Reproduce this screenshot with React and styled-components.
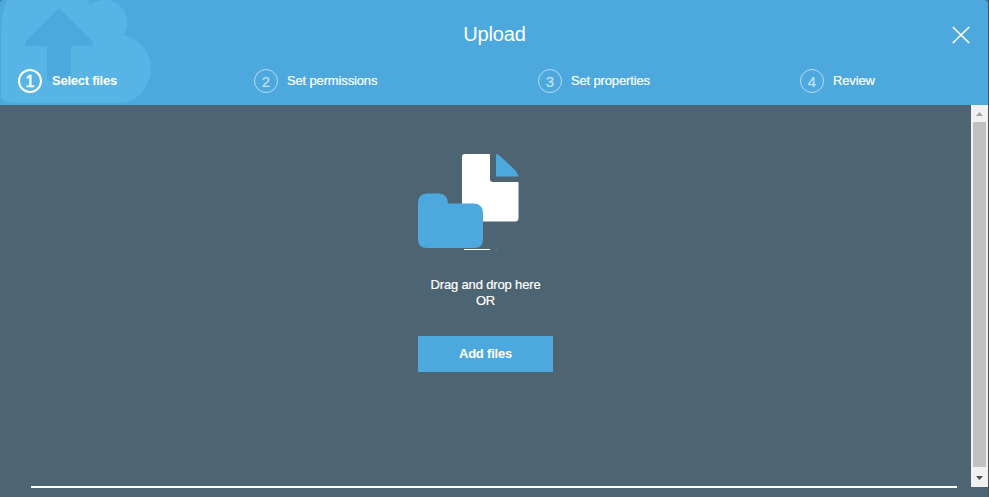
import React from "react";
import styled, { createGlobalStyle } from "styled-components";

const GlobalStyle = createGlobalStyle`
  * { box-sizing: border-box; }
  body {
    margin: 0;
    overflow: hidden;
    background: #4d4f53;
    color: #fff;
    font-family: "Liberation Sans", Arial, sans-serif;
    font-size: 13px;
  }
`;

const Dialog = styled.div`
  display: flex;
  flex-direction: column;
  width: 988px;
  height: 497px;
  background: #4d6472;
`;

const Header = styled.header`
  position: relative;
  height: 105px;
  flex: none;
  overflow: hidden;
  background: #4da8dd;
  border-radius: 3px 4px 0 0;
`;

const CloudArt = styled.svg`
  position: absolute;
  left: 0;
  top: 0;
`;

const TitleBar = styled.div`
  position: relative;
  display: grid;
  grid-template-columns: 1fr 20px;
  align-items: center;
  height: 69px;
  padding-right: 17px;
`;

const Title = styled.h1`
  margin: 0;
  padding: 0 0 2px 38px;
  text-align: center;
  font-size: 20px;
  line-height: 24px;
  font-weight: 400;
  letter-spacing: -0.15px;
`;

const CloseButton = styled.button`
  display: flex;
  width: 20px;
  height: 20px;
  padding: 0;
  border: 0;
  background: none;
`;

const Steps = styled.nav`
  position: relative;
  display: grid;
  grid-template-columns: 236px 284px 262px auto;
  padding-left: 18px;
`;

const Step = styled.div`
  display: flex;
  align-items: center;
  gap: ${({ $active }) => ($active ? "10px" : "9px")};
  height: 24px;
`;

const StepNumber = styled.span`
  width: 24px;
  height: 24px;
  border: ${({ $active }) => ($active ? "2px solid #fff" : "1.5px solid #b8dcf1")};
  border-radius: 50%;
  color: ${({ $active }) => ($active ? "#fff" : "#c4e2f4")};
  font-size: ${({ $active }) => ($active ? "16px" : "15px")};
  line-height: ${({ $active }) => ($active ? "22px" : "24px")};
  -webkit-text-stroke: ${({ $active }) => ($active ? "0.6px #fff" : "0.2px #c4e2f4")};
  text-align: center;
`;

const StepLabel = styled.span`
  line-height: 16px;
  font-weight: ${({ $active }) => ($active ? 700 : 400)};
  letter-spacing: ${({ $active }) => ($active ? "-0.25px" : "-0.15px")};
  -webkit-text-stroke: ${({ $active }) => ($active ? "0" : "0.2px #fff")};
  white-space: nowrap;
`;

const Body = styled.div`
  display: grid;
  grid-template-columns: 1fr 17px;
  height: 382px;
`;

const DropZone = styled.main`
  display: flex;
  flex-direction: column;
  align-items: center;
  padding-top: 48px;
`;

const FileArt = styled.svg`
  display: block;
  width: 135px;
  height: 98px;
`;

const Hint = styled.p`
  margin: 26px 0 0;
  line-height: 16px;
  letter-spacing: -0.15px;
  -webkit-text-stroke: 0.2px #fff;
  text-align: center;
`;

const AddButton = styled.button`
  width: 135px;
  height: 36px;
  margin-top: 27px;
  padding: 0 0 1px;
  border: 0;
  background: #4da8dd;
  color: #fff;
  font: 700 13px "Liberation Sans", Arial, sans-serif;
  letter-spacing: -0.2px;
`;

const Scrollbar = styled.div`
  display: grid;
  grid-template-rows: 17px 1fr 20px;
  justify-items: center;
  background: #f1f1f1;
`;

const Thumb = styled.div`
  width: 13px;
  background: #c1c1c1;
`;

const BottomRule = styled.hr`
  width: 926px;
  height: 2px;
  margin: -1px 0 0 31px;
  border: 0;
  background: #fff;
`;

const steps = [
  { label: "Select files", active: true },
  { label: "Set permissions" },
  { label: "Set properties" },
  { label: "Review" },
];

export default function App() {
  return (
    <>
      <GlobalStyle />
      <Dialog>
        <Header>
          <CloudArt width="160" height="105" viewBox="0 0 160 105">
            <path
              d="M1 100V29C2 24 2 9 7 0H87Q89 2 90 5C98 -1 108 -2 116 3C127 9 131 24 124 35C141 39 151 53 151 68C151 87 137 103 118 103H18Q8 103 1 99Z"
              fill="#57b4e4"
            />
            <path
              d="M57 10Q59 8 61 10L92 41Q95 46 90 46H71V78Q71 81 68 81H50Q47 81 47 78V46H28Q23 46 26 41Z"
              fill="#4da8dd"
            />
          </CloudArt>
          <TitleBar>
            <Title>Upload</Title>
            <CloseButton aria-label="Close">
              <svg width="20" height="20" viewBox="0 0 20 20">
                <path d="M1.8 2L18.2 18M18.2 2L1.8 18" stroke="#fff" strokeWidth="1.7" />
              </svg>
            </CloseButton>
          </TitleBar>
          <Steps>
            {steps.map(({ label, active }, i) => (
              <Step key={label} $active={active}>
                <StepNumber $active={active}>{i + 1}</StepNumber>
                <StepLabel $active={active}>{label}</StepLabel>
              </Step>
            ))}
          </Steps>
        </Header>
        <Body>
          <DropZone>
            <FileArt viewBox="0 0 135 98">
              <path d="M47 1H72V26Q72 29 75 29H100.5V65Q100.5 68.5 97 68.5H44V4Q44 1 47 1Z" fill="#fff" />
              <path d="M78 1Q80 1 82 3L97 17Q99 19 100.5 23.5H78Z" fill="#4da8dd" />
              <path
                d="M9 40.5H21Q30 41 30 50.5H56Q65 51 65 60V86Q65 95 56 95H9Q0 95 0 86V50Q0 41 9 40.5Z"
                fill="#4da8dd"
              />
              <path d="M46 96.5H72" stroke="#fff" />
              <path d="M78 96.5H80" stroke="#4d84a2" />
            </FileArt>
            <Hint>
              Drag and drop here
              <br />
              OR
            </Hint>
            <AddButton>Add files</AddButton>
          </DropZone>
          <Scrollbar>
            <svg width="17" height="17" viewBox="0 0 17 17">
              <path d="M5 11L8.5 7L12 11Z" fill="#a3a3a3" />
            </svg>
            <Thumb />
            <svg width="17" height="20" viewBox="0 0 17 20">
              <path d="M5 9L8.5 13L12 9Z" fill="#505050" />
            </svg>
          </Scrollbar>
        </Body>
        <BottomRule />
      </Dialog>
    </>
  );
}
